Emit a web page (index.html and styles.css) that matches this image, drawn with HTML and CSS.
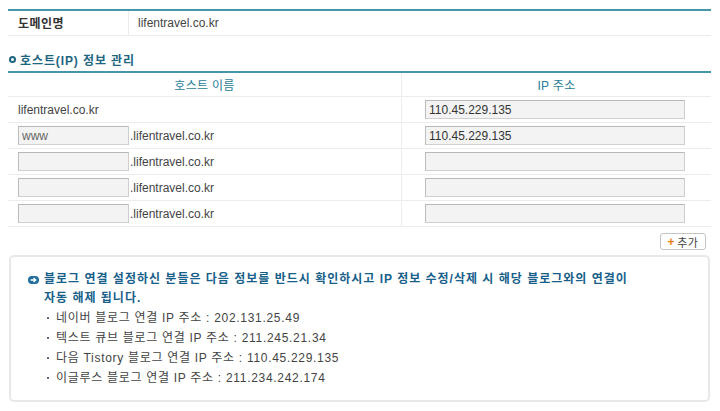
FILE: index.html
```html
<!DOCTYPE html>
<html lang="ko">
<head>
<meta charset="utf-8">
<title>호스트 정보 관리</title>
<link rel="stylesheet" href="styles.css">
</head>
<body>
<div class="wrap">
  <table class="domain">
    <tr>
      <th class="domain-label">도메인명</th>
      <td class="domain-value">lifentravel.co.kr</td>
    </tr>
  </table>

  <h2 class="section-title"><span class="ring"></span>호스트(IP) 정보 관리</h2>

  <table class="hosts">
    <thead>
      <tr>
        <th class="col-host">호스트 이름</th>
        <th class="col-ip">IP 주소</th>
      </tr>
    </thead>
    <tbody>
      <tr>
        <td class="host-cell">lifentravel.co.kr</td>
        <td class="ip-cell"><input class="ip-input" type="text" value="110.45.229.135"></td>
      </tr>
      <tr>
        <td class="host-cell"><input class="host-input" type="text" value="www"><span class="suffix">.lifentravel.co.kr</span></td>
        <td class="ip-cell"><input class="ip-input" type="text" value="110.45.229.135"></td>
      </tr>
      <tr>
        <td class="host-cell"><input class="host-input" type="text" value=""><span class="suffix">.lifentravel.co.kr</span></td>
        <td class="ip-cell"><input class="ip-input" type="text" value=""></td>
      </tr>
      <tr>
        <td class="host-cell"><input class="host-input" type="text" value=""><span class="suffix">.lifentravel.co.kr</span></td>
        <td class="ip-cell"><input class="ip-input" type="text" value=""></td>
      </tr>
      <tr>
        <td class="host-cell"><input class="host-input" type="text" value=""><span class="suffix">.lifentravel.co.kr</span></td>
        <td class="ip-cell"><input class="ip-input" type="text" value=""></td>
      </tr>
    </tbody>
  </table>

  <div class="actions">
    <button class="add-btn" type="button"><span class="plus">+</span>추가</button>
  </div>

  <div class="notice">
    <p class="notice-head">
      <svg class="notice-icon" width="11" height="8" viewBox="0 0 11 8" aria-hidden="true">
        <rect x="0" y="0" width="11" height="8" rx="4" fill="#1f6d9c"/>
        <path d="M2.5 4H7.5M5.5 2L7.8 4L5.5 6" stroke="#fff" stroke-width="1.3" fill="none"/>
      </svg>
      <span>블로그 연결 설정하신 분들은 다음 정보를 반드시 확인하시고 IP 정보 수정/삭제 시 해당 블로그와의 연결이<br>자동 해제 됩니다.</span>
    </p>
    <ul class="notice-list">
      <li>네이버 블로그 연결 IP 주소 : 202.131.25.49</li>
      <li>텍스트 큐브 블로그 연결 IP 주소 : 211.245.21.34</li>
      <li>다음 Tistory 블로그 연결 IP 주소 : 110.45.229.135</li>
      <li>이글루스 블로그 연결 IP 주소 : 211.234.242.174</li>
    </ul>
  </div>
</div>
</body>
</html>
```

FILE: styles.css
```css
html, body {
  margin: 0;
  padding: 0;
  background: #fff;
}

body {
  font-family: "Liberation Sans", "Noto Sans CJK KR", sans-serif;
  font-size: 12px;
  color: #333;
}

.wrap {
  padding: 9px 9px 0 8px;
}

table {
  border-collapse: collapse;
  width: 100%;
}

th, td {
  padding: 0;
  font-weight: normal;
  text-align: left;
}

/* Domain row */
.domain {
  border-top: 2px solid #4596a8;
}

.domain tr {
  height: 25px;
  border-bottom: 1px solid #ececec;
}

.domain-label {
  width: 110px;
  padding-left: 10px;
  font-weight: bold;
  letter-spacing: 0.5px;
  color: #333;
  border-right: 1px solid #ececec;
}

.domain-value {
  padding-left: 9px;
  color: #444;
}

/* Section title */
.section-title {
  display: flex;
  align-items: center;
  gap: 4px;
  margin: 12px 0 0 0;
  height: 23px;
  font-size: 12px;
  font-weight: bold;
  letter-spacing: 0.9px;
  color: #1e6580;
  padding-left: 1px;
}

.ring {
  box-sizing: border-box;
  width: 7px;
  height: 7px;
  border: 2px solid #1e6580;
  border-radius: 50%;
}

/* Hosts table */
.hosts {
  border-top: 2px solid #4596a8;
}

.hosts thead tr {
  height: 25px;
  border-bottom: 1px solid #ececec;
}

.hosts th {
  text-align: center;
  color: #2a7d96;
  letter-spacing: 0.3px;
}

.col-host {
  width: 393px;
  border-right: 1px solid #ececec;
}

.hosts tbody tr {
  height: 26px;
  border-bottom: 1px solid #ececec;
}

.host-cell {
  padding-left: 10px;
  border-right: 1px solid #ececec;
  color: #444;
  white-space: nowrap;
}

.ip-cell {
  padding-left: 23px;
}

input {
  box-sizing: border-box;
  height: 19px;
  margin: 0;
  padding: 0 3px;
  background: #f3f3f3;
  border: 1px solid #cfcfcf;
  border-top-color: #b8b8b8;
  border-left-color: #bdbdbd;
  font-family: "Liberation Sans", "Noto Sans CJK KR", sans-serif;
  font-size: 12px;
  color: #333;
  vertical-align: middle;
}

.host-input {
  width: 111px;
  color: #666;
}

.ip-input {
  width: 260px;
}

.suffix {
  vertical-align: middle;
  margin-left: 1px;
}

/* Add button */
.actions {
  display: flex;
  justify-content: flex-end;
  padding: 6px 5px 0 0;
}

.add-btn {
  box-sizing: border-box;
  height: 17px;
  width: 46px;
  padding: 0;
  display: flex;
  align-items: center;
  justify-content: center;
  gap: 2px;
  background: #fff;
  border: 1px solid #c4c4c4;
  border-radius: 3px;
  font-family: "Liberation Sans", "Noto Sans CJK KR", sans-serif;
  font-size: 11px;
  letter-spacing: 0.5px;
  color: #444;
}

.plus {
  color: #ef7d00;
  font-weight: bold;
  font-size: 12px;
}

/* Notice box */
.notice {
  margin: 5px 1px 0 1px;
  border: 2px solid #e8e8e8;
  border-radius: 5px;
  padding: 13px 10px 12px 17px;
}

.notice-head {
  margin: 0;
  display: flex;
  align-items: flex-start;
  gap: 5px;
  line-height: 19px;
  font-weight: bold;
  letter-spacing: 1px;
  color: #17608a;
}

.notice-icon {
  flex: none;
  margin-top: 6px;
}

.notice-list {
  list-style: none;
  margin: 0;
  padding: 0 0 0 19px;
}

.notice-list li {
  display: flex;
  align-items: center;
  gap: 7px;
  line-height: 20px;
  letter-spacing: 0.7px;
  color: #444;
}

.notice-list li::before {
  content: "";
  width: 2px;
  height: 2px;
  background: #5a6e8a;
}
```
